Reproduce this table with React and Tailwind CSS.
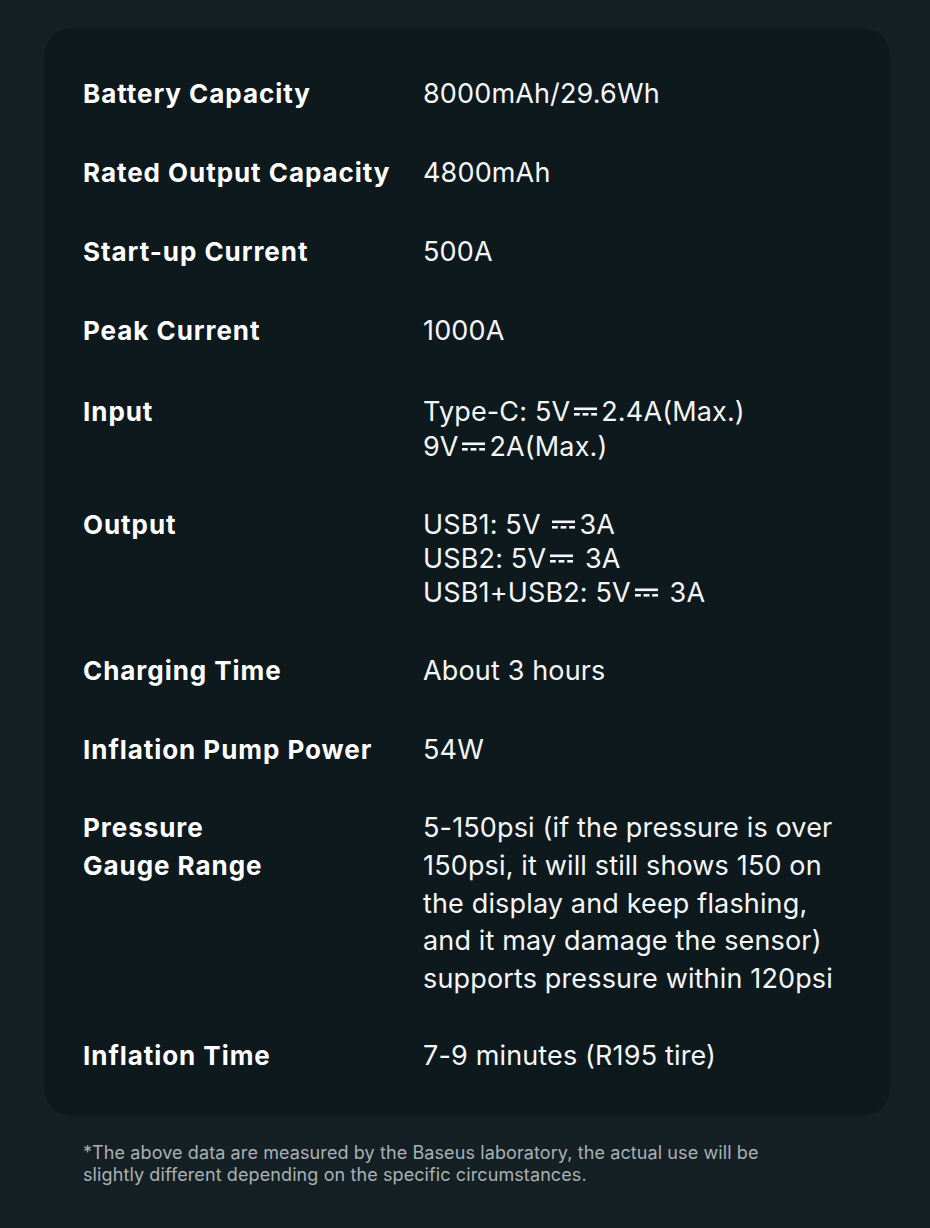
import React from "react";

const DC = () => (
  <svg width="25" height="14" viewBox="0 0 25 14" className="inline-block mx-[3px] align-[2px]">
    <rect x="1" y="2.5" width="23" height="2.6" fill="currentColor" />
    <rect x="1" y="8" width="5.8" height="2.6" fill="currentColor" />
    <rect x="9.6" y="8" width="5.8" height="2.6" fill="currentColor" />
    <rect x="18.2" y="8" width="5.8" height="2.6" fill="currentColor" />
  </svg>
);

const rows = [
  { label: ["Battery Capacity"], value: ["8000mAh/29.6Wh"], lh: "leading-[36px]", mt: "mt-0" },
  { label: ["Rated Output Capacity"], value: ["4800mAh"], lh: "leading-[36px]", mt: "mt-[43px]" },
  { label: ["Start-up Current"], value: ["500A"], lh: "leading-[36px]", mt: "mt-[43px]" },
  { label: ["Peak Current"], value: ["1000A"], lh: "leading-[36px]", mt: "mt-[43px]" },
  {
    label: ["Input"],
    value: [
      <>Type-C: 5V<DC />2.4A(Max.)</>,
      <>9V<DC />2A(Max.)</>,
    ],
    lh: "leading-[35px]",
    mt: "mt-[45px]",
  },
  {
    label: ["Output"],
    value: [
      <>USB1: 5V <DC />3A</>,
      <>USB2: 5V<DC /> 3A</>,
      <>USB1+USB2: 5V<DC /> 3A</>,
    ],
    lh: "leading-[34px]",
    mt: "mt-[44px]",
  },
  { label: ["Charging Time"], value: ["About 3 hours"], lh: "leading-[36px]", mt: "mt-[43px]" },
  { label: ["Inflation Pump Power"], value: ["54W"], lh: "leading-[36px]", mt: "mt-[43px]" },
  {
    label: ["Pressure", "Gauge Range"],
    value: [
      "5-150psi (if the pressure is over",
      "150psi, it will still shows 150 on",
      "the display and keep flashing,",
      "and it may damage the sensor)",
      "supports pressure within 120psi",
    ],
    lh: "leading-[37.8px]",
    mt: "mt-[41px]",
  },
  { label: ["Inflation Time"], value: ["7-9 minutes (R195 tire)"], lh: "leading-[36px]", mt: "mt-[40px]" },
];

export default function App() {
  return (
    <div className="w-[930px] h-[1228px] bg-[#142024] pt-[28px] px-[44px] [font-family:Inter,'Liberation_Sans',sans-serif]">
      <div className="bg-[#0e191e] rounded-[28px] w-[846px] h-[1088px] pt-[48px] pl-[39px]">
        {rows.map((r, i) => (
          <div key={i} className={`flex ${r.mt}`}>
            <div className={`w-[340px] shrink-0 text-white font-bold text-[26px] tracking-[0.95px] ${r.lh}`}>
              {r.label.map((l, j) => (
                <div key={j}>{l}</div>
              ))}
            </div>
            <div className={`text-[#f4f6f7] text-[27px] tracking-[0.15px] ${r.lh}`}>
              {r.value.map((v, j) => (
                <div key={j} className="whitespace-nowrap">{v}</div>
              ))}
            </div>
          </div>
        ))}
      </div>
      <div className="mt-[26px] pl-[39px] text-[#aab1b5] text-[18px] tracking-[0.1px] leading-[22px]">
        <div>*The above data are measured by the Baseus laboratory, the actual use will be</div>
        <div>slightly different depending on the specific circumstances.</div>
      </div>
    </div>
  );
}
